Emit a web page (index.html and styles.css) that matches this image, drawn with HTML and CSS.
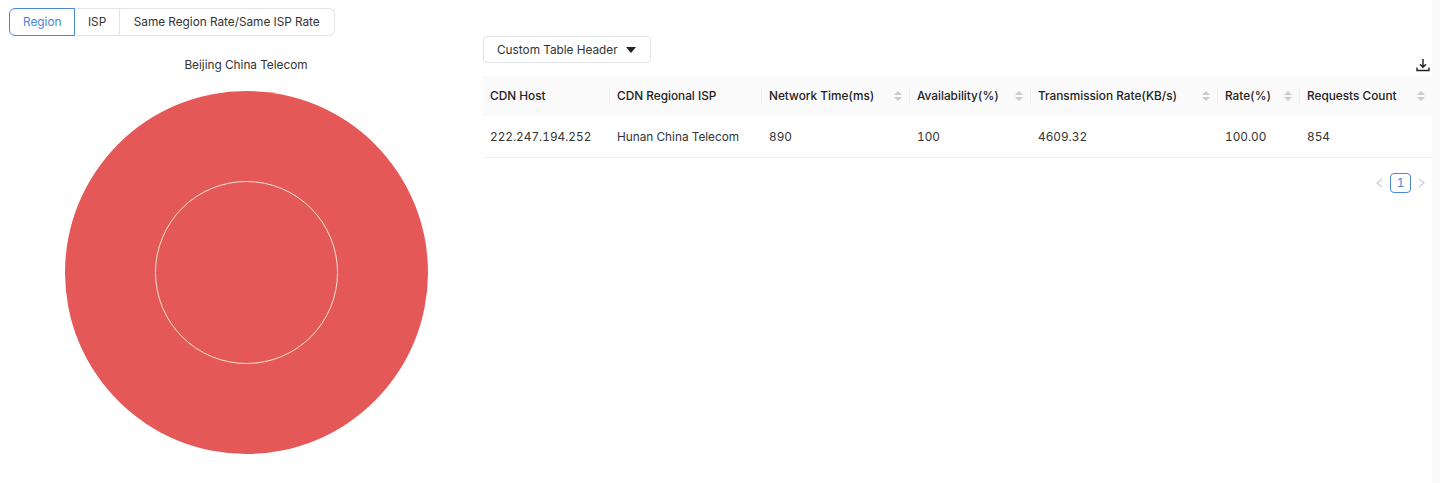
FILE: index.html
```html
<!DOCTYPE html>
<html lang="en">
<head>
  <meta charset="UTF-8" />
  <title>CDN Region Analysis</title>
  <link rel="stylesheet" href="styles.css">
</head>
<body>
  <div class="page">
    <div class="left-panel">
      <div class="tabs">
        <div class="tab tab-active">Region</div>
        <div class="tab tab-isp">ISP</div>
        <div class="tab">Same Region Rate/Same ISP Rate</div>
      </div>
      <div class="chart-title">Beijing China Telecom</div>
      <svg class="chart" width="363" height="363" viewBox="0 0 363 363">
        <circle cx="181.5" cy="181.5" r="181.5" fill="#e45957" />
        <circle cx="181.5" cy="181.5" r="91" fill="#e45957" stroke="#f8e3d3" stroke-width="1" />
      </svg>
    </div>

    <div class="right-panel">
      <button class="header-btn">
        Custom Table Header
        <svg width="10" height="6" viewBox="0 0 10 6"><path d="M0 0h10L5 6z" fill="#222" /></svg>
      </button>
      <div class="toolbar">
        <svg width="14" height="14" viewBox="0 0 14 14" fill="none" stroke="#222" stroke-width="1.4">
          <path d="M7 1v8M4 6.2 7 9.2l3-3M1 9.5v3h12v-3" />
        </svg>
      </div>
      <table class="data-table">
        <thead>
          <tr>
            <th class="col-host"><div class="th-inner">CDN Host</div></th>
            <th class="col-isp"><div class="th-inner">CDN Regional ISP</div></th>
            <th class="col-time"><div class="th-inner">Network Time(ms)<span class="sort"><i class="up"></i><i class="down"></i></span></div></th>
            <th class="col-avail"><div class="th-inner">Availability(%)<span class="sort"><i class="up"></i><i class="down"></i></span></div></th>
            <th class="col-trans"><div class="th-inner">Transmission Rate(KB/s)<span class="sort"><i class="up"></i><i class="down"></i></span></div></th>
            <th class="col-rate"><div class="th-inner">Rate(%)<span class="sort"><i class="up"></i><i class="down"></i></span></div></th>
            <th class="col-count"><div class="th-inner">Requests Count<span class="sort"><i class="up"></i><i class="down"></i></span></div></th>
          </tr>
        </thead>
        <tbody>
          <tr>
            <td>222.247.194.252</td>
            <td>Hunan China Telecom</td>
            <td>890</td>
            <td>100</td>
            <td>4609.32</td>
            <td>100.00</td>
            <td>854</td>
          </tr>
        </tbody>
      </table>
      <div class="pagination">
        <svg width="9" height="10" viewBox="0 0 9 10" fill="none" stroke="#c4c8cc" stroke-width="1.1"><path d="M7 .8 2 5l5 4.2" /></svg>
        <div class="page-num">1</div>
        <svg width="9" height="10" viewBox="0 0 9 10" fill="none" stroke="#c4c8cc" stroke-width="1.1"><path d="M2 .8 7 5 2 9.2" /></svg>
      </div>
    </div>
    <div class="edge-strip"></div>
  </div>
</body>
</html>
```

FILE: styles.css
```css
* {
  box-sizing: border-box;
}

html, body {
  height: 100%;
}

body {
  margin: 0;
  background: #fff;
  color: #2b2b2b;
  font-family: Inter, 'Noto Sans', sans-serif;
  font-size: 11.8px;
  font-variant-numeric: tabular-nums;
  overflow: hidden;
}

.page {
  display: flex;
  height: 483px;
}

.left-panel {
  width: 483px;
  padding: 8px 0 0 9px;
  display: flex;
  flex-direction: column;
}

.tabs {
  display: flex;
  align-self: flex-start;
  height: 28px;
}

.tab {
  display: flex;
  align-items: center;
  padding: 0 13px;
  border: 1px solid #e1e4e8;
  border-left: none;
  color: #333;
}

.tab-isp {
  padding: 0 12.5px;
}

.tab:last-child {
  padding: 0 14px;
  border-radius: 0 6px 6px 0;
}

.tab-active {
  border: 1px solid #4a86d8;
  border-radius: 6px 0 0 6px;
  color: #4a86d8;
}

.chart-title {
  margin-top: 22px;
  height: 15px;
  line-height: 15px;
  text-align: center;
  color: #333;
}

.chart {
  display: block;
  margin: 18px 0 0 55.5px;
}

.right-panel {
  width: 949px;
  padding-top: 36px;
  display: flex;
  flex-direction: column;
}

.header-btn {
  align-self: flex-start;
  display: flex;
  align-items: center;
  gap: 8px;
  width: 168px;
  height: 27px;
  padding: 0 13px;
  background: #fff;
  border: 1px solid #e1e4e8;
  border-radius: 4px;
  color: #333;
  font: inherit;
  white-space: nowrap;
}

.toolbar {
  display: flex;
  justify-content: flex-end;
  height: 13px;
  padding-right: 2px;
}

.toolbar svg {
  margin-top: -5px;
}

.data-table {
  width: 949px;
  table-layout: fixed;
  border-collapse: collapse;
}

.col-host { width: 127px; }
.col-isp { width: 152px; }
.col-time { width: 148px; }
.col-avail { width: 121px; }
.col-trans { width: 187px; }
.col-rate { width: 82px; }
.col-count { width: 132px; }

.data-table th {
  height: 40px;
  padding: 0 0 1px;
  background: #fafafa;
  color: #222;
  font-weight: 500;
  text-align: left;
}

.th-inner {
  display: flex;
  align-items: center;
  justify-content: space-between;
  height: 18px;
  padding: 0 7px;
  border-right: 1px solid #f0f0f0;
}

.data-table th:last-child .th-inner {
  border-right: none;
}

.data-table td {
  height: 41px;
  padding: 1px 7px 0;
  border-bottom: 1px solid #eff0f1;
  color: #333;
}

.sort {
  display: flex;
  flex-direction: column;
  gap: 2px;
}

.sort i {
  display: block;
  width: 0;
  height: 0;
  border-left: 4px solid transparent;
  border-right: 4px solid transparent;
}

.sort .up {
  border-bottom: 4px solid #c8ccd0;
}

.sort .down {
  border-top: 4px solid #c8ccd0;
}

.pagination {
  display: flex;
  justify-content: flex-end;
  align-items: center;
  gap: 6px;
  margin-top: 15px;
  padding-right: 6px;
}

.page-num {
  width: 21px;
  height: 20px;
  line-height: 18px;
  text-align: center;
  border: 1px solid #4a86d8;
  border-radius: 4px;
  color: #4a86d8;
}

.edge-strip {
  flex: 1;
  background: #fafafa;
}
```
